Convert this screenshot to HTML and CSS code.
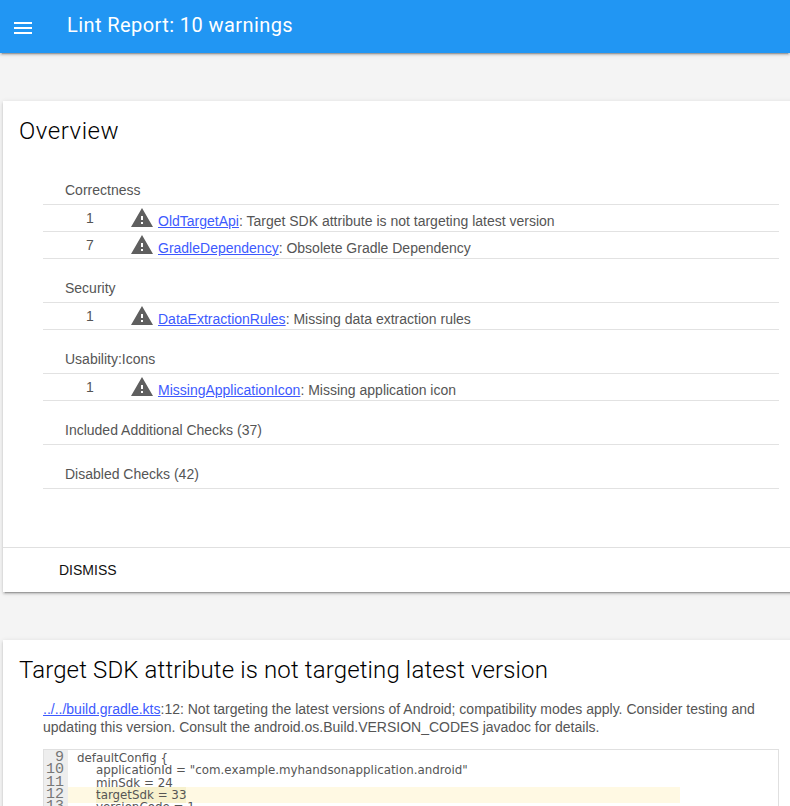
FILE: index.html
```html
<!DOCTYPE html>
<html lang="en">
<head>
<meta charset="utf-8">
<title>Lint Report</title>
<link rel="stylesheet" href="styles.css">
</head>
<body>
<div class="page">
  <header class="appbar">
    <svg class="menu-icon" width="18" height="12" viewBox="0 0 18 12"><path d="M0 0h18v2H0zM0 5h18v2H0zM0 10h18v2H0z" fill="#fff"/></svg>
    <h1 class="appbar-title">Lint Report: 10 warnings</h1>
  </header>
  <main class="content">
    <section class="card overview">
      <h2 class="card-title">Overview</h2>
      <div class="summary">
        <div class="cat">Correctness</div>
        <div class="row"><span class="count">1</span><svg class="warn" viewBox="0 0 24 24"><path d="M1 21h22L12 2 1 21zm12-3h-2v-2h2v2zm0-4h-2v-4h2v4z"/></svg><span class="msg"><a href="#">OldTargetApi</a>: Target SDK attribute is not targeting latest version</span></div>
        <div class="row"><span class="count">7</span><svg class="warn" viewBox="0 0 24 24"><path d="M1 21h22L12 2 1 21zm12-3h-2v-2h2v2zm0-4h-2v-4h2v4z"/></svg><span class="msg"><a href="#">GradleDependency</a>: Obsolete Gradle Dependency</span></div>
        <div class="cat">Security</div>
        <div class="row"><span class="count">1</span><svg class="warn" viewBox="0 0 24 24"><path d="M1 21h22L12 2 1 21zm12-3h-2v-2h2v2zm0-4h-2v-4h2v4z"/></svg><span class="msg"><a href="#">DataExtractionRules</a>: Missing data extraction rules</span></div>
        <div class="cat">Usability:Icons</div>
        <div class="row"><span class="count">1</span><svg class="warn" viewBox="0 0 24 24"><path d="M1 21h22L12 2 1 21zm12-3h-2v-2h2v2zm0-4h-2v-4h2v4z"/></svg><span class="msg"><a href="#">MissingApplicationIcon</a>: Missing application icon</span></div>
        <div class="cat">Included Additional Checks (37)</div>
        <div class="cat">Disabled Checks (42)</div>
      </div>
      <div class="actions"><span class="dismiss">DISMISS</span></div>
    </section>
    <section class="card detail">
      <h2 class="card-title">Target SDK attribute is not targeting latest version</h2>
      <p class="issue"><a href="#">../../build.gradle.kts</a>:12: Not targeting the latest versions of Android; compatibility modes apply. Consider testing and updating this version. Consult the android.os.Build.VERSION_CODES javadoc for details.</p>
      <div class="code">
        <div class="line"><span class="ln">9</span><span class="src i1">defaultConfig {</span></div>
        <div class="line"><span class="ln">10</span><span class="src i2">applicationId = "com.example.myhandsonapplication.android"</span></div>
        <div class="line"><span class="ln">11</span><span class="src i2">minSdk = 24</span></div>
        <div class="line hl"><span class="ln">12</span><span class="src i2"><span class="mark">targetSdk = 33</span></span></div>
        <div class="line"><span class="ln">13</span><span class="src i2">versionCode = 1</span></div>
      </div>
    </section>
  </main>
</div>
</body>
</html>
```
FILE: styles.css
```css
html, body { margin: 0; padding: 0; height: 806px; overflow: hidden; }
body { background: #f4f4f4; font-family: "Liberation Sans", Arial, sans-serif; color: #555; }
.page { width: 790px; height: 806px; overflow: hidden; }
.appbar { height: 53px; background: #2196f3; display: flex; align-items: center; padding-left: 14px; box-shadow: 0 2px 2px 0 rgba(0,0,0,.14), 0 3px 1px -2px rgba(0,0,0,.2), 0 1px 5px 0 rgba(0,0,0,.12); box-sizing: border-box; }
.menu-icon { display: block; margin-top: 2px; }
.appbar-title { margin: 0 0 3px 35px; font: 400 20px/28px Roboto, sans-serif; letter-spacing: .42px; color: #fff; }
.content { padding: 48px 0 0 3px; width: 800px; box-sizing: border-box; }
.card { background: #fff; box-shadow: 0 2px 2px 0 rgba(0,0,0,.14), 0 3px 1px -2px rgba(0,0,0,.2), 0 1px 5px 0 rgba(0,0,0,.12); }
.overview { height: 491px; display: flex; flex-direction: column; margin-bottom: 48px; }
.card-title { margin: 0; padding: 14px 0 0 16px; font: 300 24px/32px Roboto, sans-serif; letter-spacing: .14px; color: #000; }
.overview .card-title { letter-spacing: .55px; }
.summary { width: 736px; margin: 28px 0 0 40px; font-size: 14px; flex: 1; }
.cat { padding-left: 22px; height: 30px; line-height: 30px; border-bottom: 1px solid #e2e2e2; box-sizing: border-box; margin-top: 14px; }
.cat:first-child { margin-top: 0; }
.row { height: 27px; display: flex; align-items: flex-start; border-bottom: 1px solid #e2e2e2; box-sizing: border-box; line-height: 16px; }
.count { width: 87px; padding-left: 43px; box-sizing: border-box; margin-top: 5px; }
.warn { width: 24px; height: 24px; margin-top: 1px; flex: none; fill: #5f5f5f; }
.msg { margin: 8px 0 0 4px; }
a { color: #3d5afe; }
.actions { height: 44px; border-top: 1px solid #e0e0e0; display: flex; align-items: center; padding-left: 56px; }
.dismiss { font-size: 14px; color: #111; }
.detail { height: 300px; }
.issue { margin: 14px 0 0 40px; width: 736px; font-size: 14px; line-height: 18px; }
.code { margin: 13px 0 0 40px; width: 736px; height: 120px; border: 1px solid #e0e0e0; box-sizing: border-box; font: 11.850px/16px "DejaVu Sans", sans-serif; color: #555; overflow: hidden; }
.line { height: 12.300px; display: flex; white-space: pre; }
.ln { width: 24px; height: 16px; flex: none; background: #eee; text-align: right; padding-right: 4px; box-sizing: border-box; color: #777; font: 15px/16px "Liberation Mono", monospace; }
.src { flex: none; width: 612px; height: 16px; box-sizing: border-box; }
.i1 { padding-left: 9px; }
.i2 { padding-left: 28px; }
.hl .src { background: #fff9e3; }
.mark { display: inline-block; height: 16px; background: #f7f1cd; }
```
